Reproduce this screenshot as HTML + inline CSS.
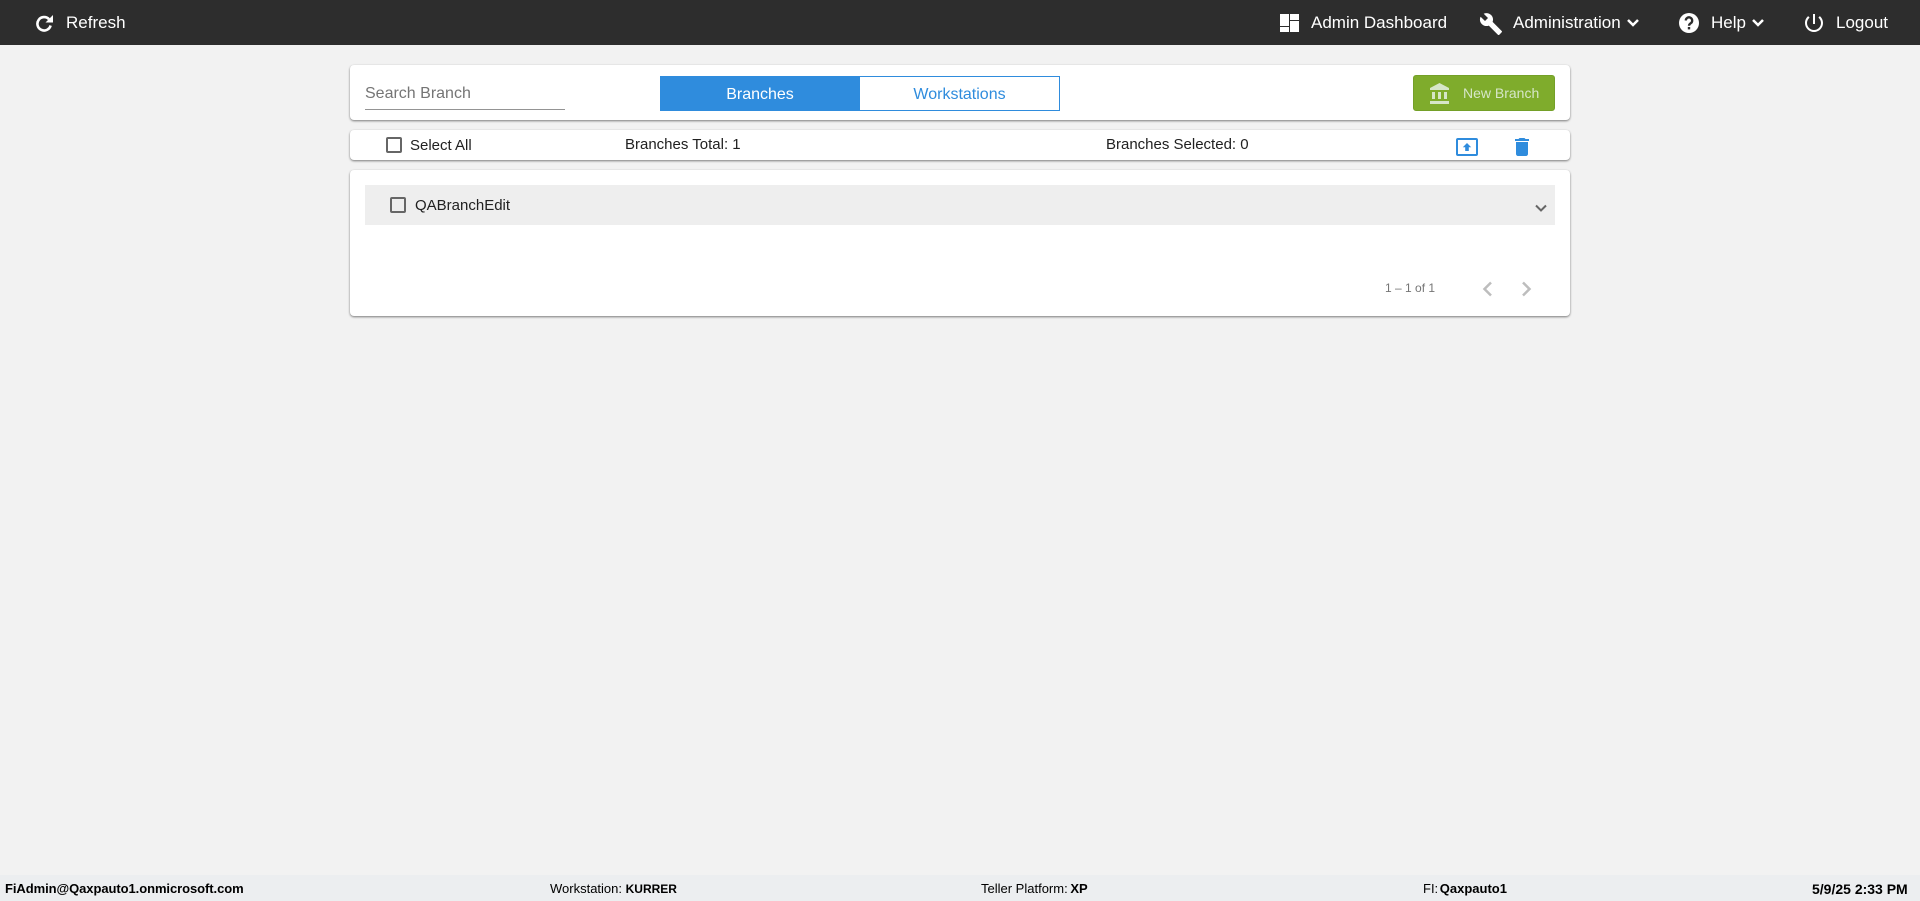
<!DOCTYPE html>
<html><head><meta charset="utf-8"><title>Branches</title>
<style>
html,body{margin:0;padding:0;width:1920px;height:901px;overflow:hidden;background:#f2f2f2;font-family:"Liberation Sans",Arial,sans-serif;color:#212121}
.a{position:absolute;white-space:nowrap}
.t{line-height:20px;height:20px}
.n{top:13px;font-size:17px;color:#fff}
svg{position:absolute;display:block}
.card{position:absolute;background:#fff;border-radius:4px;box-shadow:0 1px 2px rgba(0,0,0,.5)}
.cb{position:absolute;width:12px;height:12px;border:2px solid #666;border-radius:2px}
.f{position:absolute;top:879px;line-height:20px;font-size:13px;color:#000;white-space:nowrap}
.f b{font-weight:700}
</style></head><body>
<div class="a" style="left:0;top:0;width:1920px;height:45px;background:#2d2d2d"></div>
<svg style="left:36px;top:15px" width="17" height="17" viewBox="0 0 17 17"><path d="M13 4.200A6.700 6.700 0 1 0 14.600 10.500" fill="none" stroke="#fff" stroke-width="2.600"/><path d="M17 0v7.500H9.500z" fill="#fff"/></svg>
<div class="a t n" style="left:66px">Refresh</div>
<svg style="left:1280px;top:14px" width="19" height="18" viewBox="0 0 19 18" fill="#fff"><rect x="0" y="0" width="9" height="12"/><rect x="0" y="13" width="9" height="5"/><rect x="10" y="0" width="9" height="6"/><rect x="10" y="7" width="9" height="11"/></svg>
<div class="a t n" style="left:1311px">Admin Dashboard</div>
<svg style="left:1479px;top:12px" width="24" height="24" viewBox="0 0 24 24" fill="#fff"><path d="M22.700 19l-9.100-9.100c.9-2.300.4-5-1.500-6.900-2-2-5-2.400-7.400-1.300L9 6 6 9 1.600 4.700C.4 7.100.9 10.100 2.900 12.100c1.900 1.900 4.600 2.400 6.900 1.500l9.100 9.100c.4.4 1 .4 1.400 0l2.300-2.300c.5-.4.5-1.100.1-1.400z"/></svg>
<div class="a t n" style="left:1513px">Administration</div>
<svg style="left:1626px;top:18px" width="14" height="10" viewBox="0 0 14 10"><path d="M2 2l5 5 5-5" fill="none" stroke="#fff" stroke-width="2.500"/></svg>
<svg style="left:1679px;top:13px" width="20" height="20" viewBox="0 0 20 20"><circle cx="10" cy="10" r="10" fill="#fff"/><path d="M6.800 7.500a3.200 3.200 0 1 1 5 2.700c-1.200.8-1.800 1.300-1.800 2.500" fill="none" stroke="#2d2d2d" stroke-width="2.300"/><rect x="8.800" y="14" width="2.400" height="2.400" fill="#2d2d2d"/></svg>
<div class="a t n" style="left:1711px">Help</div>
<svg style="left:1751px;top:18px" width="14" height="10" viewBox="0 0 14 10"><path d="M2 2l5 5 5-5" fill="none" stroke="#fff" stroke-width="2.500"/></svg>
<svg style="left:1802px;top:11px" width="24" height="24" viewBox="0 0 24 24" fill="#fff"><path d="M13 3h-2v10h2V3zm4.830 2.170l-1.420 1.420C17.990 7.860 19 9.810 19 12c0 3.870-3.130 7-7 7s-7-3.130-7-7c0-2.190 1.010-4.140 2.580-5.420L6.170 5.170C4.230 6.820 3 9.260 3 12c0 4.970 4.030 9 9 9s9-4.030 9-9c0-2.740-1.230-5.180-3.170-6.830z"/></svg>
<div class="a t n" style="left:1836px">Logout</div>

<div class="card" style="left:350px;top:65px;width:1220px;height:55px"></div>
<div class="a t" style="left:365px;top:84px;font-size:16px;color:#757575">Search Branch</div>
<div class="a" style="left:365px;top:109px;width:200px;height:1px;background:#949494"></div>
<div class="a" style="left:660px;top:76px;width:200px;height:35px;line-height:37px;text-align:center;background:#2f8cdd;color:#fff;font-size:16px">Branches</div>
<div class="a" style="left:859px;top:76px;width:199px;height:33px;line-height:36px;text-align:center;background:#fff;color:#2f8cdd;border:1px solid #2f8cdd;font-size:16px">Workstations</div>
<div class="a" style="left:1413px;top:75px;width:140px;height:34px;background:#7fac2c;border:1px solid #74a028;border-radius:3px"></div>
<svg style="left:1428px;top:82px" width="24" height="24" viewBox="0 0 24 24" fill="#d6e6c8"><path d="M4 10v7h3v-7H4zm6 0v7h3v-7h-3zM2 22h19v-3H2v3zm14-12v7h3v-7h-3zm-4.500-9L2 6v2h19V6l-9.500-5z"/></svg>
<div class="a t" style="left:1463px;top:83px;font-size:14px;color:#d6e6c8">New Branch</div>

<div class="card" style="left:350px;top:130px;width:1220px;height:30px"></div>
<div class="cb" style="left:386px;top:137px"></div>
<div class="a t" style="left:410px;top:136px;font-size:15px">Select All</div>
<div class="a t" style="left:625px;top:135px;font-size:15px">Branches Total: 1</div>
<div class="a t" style="left:1106px;top:135px;font-size:15px">Branches Selected: 0</div>
<svg style="left:1456px;top:138px" width="22" height="18" viewBox="0 0 22 18"><rect x="1" y="1" width="20" height="16" rx="1" fill="none" stroke="#2f8cdd" stroke-width="2"/><path d="M11 5l4.200 4.200h-2.400V13H9.200V9.200H6.800z" fill="#2f8cdd"/></svg>
<svg style="left:1510px;top:135px" width="24" height="24" viewBox="0 0 24 24" fill="#2f8cdd"><path d="M6 19c0 1.100.9 2 2 2h8c1.100 0 2-.9 2-2V7H6v12zM19 4h-3.500l-1-1h-5l-1 1H5v2h14V4z"/></svg>

<div class="card" style="left:350px;top:170px;width:1220px;height:146px"></div>
<div class="a" style="left:365px;top:185px;width:1190px;height:40px;background:#eee"></div>
<div class="cb" style="left:390px;top:197px"></div>
<div class="a t" style="left:415px;top:196px;font-size:15px">QABranchEdit</div>
<svg style="left:1535px;top:204px" width="12" height="9" viewBox="0 0 12 9"><path d="M1 1.500l5 5 5-5" fill="none" stroke="#666" stroke-width="2"/></svg>
<div class="a t" style="left:1385px;top:278px;font-size:12px;color:#757575">1 – 1 of 1</div>
<svg style="left:1482px;top:281px" width="10" height="16" viewBox="0 0 10 16"><path d="M9 1.500L2.500 8 9 14.500" fill="none" stroke="#bdbdbd" stroke-width="2.500"/></svg>
<svg style="left:1522px;top:281px" width="10" height="16" viewBox="0 0 10 16"><path d="M1 1.500L7.500 8 1 14.500" fill="none" stroke="#bdbdbd" stroke-width="2.500"/></svg>

<div class="a" style="left:0;top:875px;width:1920px;height:26px;background:#eceef0"></div>
<div class="f" style="left:5px"><b style="letter-spacing:-.07px">FiAdmin@Qaxpauto1.onmicrosoft.com</b></div>
<div class="f" style="left:550px">Workstation: <b style="font-size:12px">KURRER</b></div>
<div class="f" style="left:981px">Teller Platform: <b style="margin-left:-1px">XP</b></div>
<div class="f" style="left:1423px">FI: <b style="margin-left:-2px">Qaxpauto1</b></div>
<div class="f" style="left:1812px"><b style="font-size:14px">5/9/25 2:33 PM</b></div>
</body></html>
